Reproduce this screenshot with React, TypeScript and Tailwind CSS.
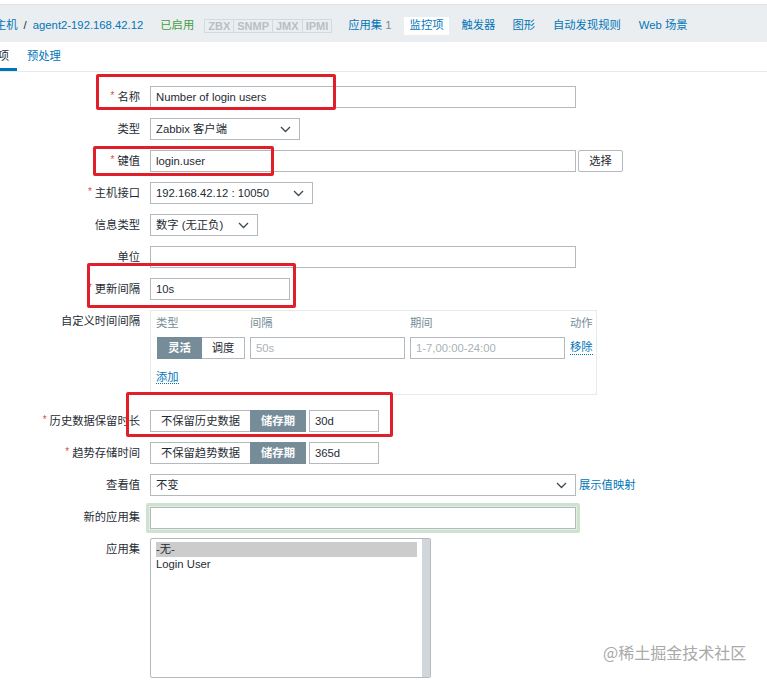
import React from 'react';

const FONT = { fontFamily: '"Liberation Sans", Arial, "Noto Sans CJK SC", sans-serif' };

function Chevron() {
  return (
    <svg width="11" height="7" viewBox="0 0 11 7" className="shrink-0">
      <path d="M1 1l4.5 4.5L10 1" fill="none" stroke="#3a4a52" strokeWidth="1.3" />
    </svg>
  );
}

function Select({ value, width }: { value: string; width: string }) {
  return (
    <div className={`flex items-center justify-between h-[22px] border border-[#b3b9bd] bg-white pl-[5px] pr-[8px] ${width}`}>
      <span>{value}</span>
      <Chevron />
    </div>
  );
}

function Input({ value = '', width, muted = false }: { value?: string; width: string; muted?: boolean }) {
  return (
    <div className={`flex items-center h-[22px] border border-[#b3b9bd] bg-white px-[5px] whitespace-nowrap ${width} ${muted ? 'text-[#a9b3b8]' : ''}`}>
      {value}
    </div>
  );
}

function Row({ label, required = false, children, className = '' }: { label: string; required?: boolean; children: React.ReactNode; className?: string }) {
  return (
    <div className={`flex items-start ${className}`}>
      <div className="w-[140px] h-[22px] flex items-center justify-end shrink-0 whitespace-nowrap">
        {required && <span className="text-[#d64e4e] text-[10px] mr-[3px] -mt-[3px]">*</span>}
        {label}
      </div>
      <div className="ml-[10px] flex items-start">{children}</div>
    </div>
  );
}

function Storage({ off, days }: { off: string; days: string }) {
  return (
    <div className="flex items-center">
      <div className="flex h-[22px]">
        <div className="w-[100px] flex items-center justify-center border border-[#b3b9bd] border-r-0 bg-white">{off}</div>
        <div className="w-[56px] flex items-center justify-center bg-[#768d99] text-white font-bold">储存期</div>
      </div>
      <Input value={days} width="w-[70px] ml-[3px]" />
    </div>
  );
}

function RedBox({ cls }: { cls: string }) {
  return <div className={`absolute border-[3px] border-[#e11f2b] rounded-[2px] pointer-events-none ${cls}`} />;
}

export default function App() {
  return (
    <div className="relative w-[767px] h-[680px] overflow-hidden bg-white text-[11.3px] text-[#1f2c33]" style={FONT}>
      {/* Header bar */}
      <div className="h-[4px] bg-white" />
      <div className="h-[38px] bg-[#ebeef0] border-t border-[#dfe4e7] flex items-center pt-[4px] whitespace-nowrap">
        <span className="ml-[-5px] text-[#0275b8]">主机</span>
        <span className="ml-[6px] text-[#1f2c33]">/</span>
        <span className="ml-[6px] text-[#0275b8]">agent2-192.168.42.12</span>
        <span className="ml-[17px] text-[#429e47]">已启用</span>
        <div className="ml-[10px] flex h-[14px] border border-[#d3d9dc] text-[#b6c0c5] text-[11px] font-bold leading-[12px]">
          <span className="px-[3px] border-r border-[#d3d9dc]">ZBX</span>
          <span className="px-[3px] border-r border-[#d3d9dc]">SNMP</span>
          <span className="px-[3px] border-r border-[#d3d9dc]">JMX</span>
          <span className="px-[3px]">IPMI</span>
        </div>
        <span className="ml-[16px] text-[#0275b8]">应用集 <span className="text-[#768d99]">1</span></span>
        <span className="ml-[12px] bg-white px-[6px] h-[18px] flex items-center text-[#0275b8]">监控项</span>
        <span className="ml-[12px] text-[#0275b8]">触发器</span>
        <span className="ml-[17px] text-[#0275b8]">图形</span>
        <span className="ml-[18px] text-[#0275b8]">自动发现规则</span>
        <span className="ml-[18px] text-[#0275b8]">Web 场景</span>
      </div>

      {/* Tabs */}
      <div className="h-[30px] border-b border-[#e6eaec] flex items-end">
        <div className="ml-[-10px] w-[27px] h-[30px] flex items-center justify-center border-b-[3px] border-[#0275b8]">
          <span className="mt-[4px]">项</span>
        </div>
        <div className="ml-[10px] h-[30px] flex items-center text-[#0275b8]">
          <span className="mt-[1px]">预处理</span>
        </div>
      </div>

      {/* Form */}
      <div className="pt-[14px] flex flex-col gap-[10px]">
        <Row label="名称" required>
          <Input value="Number of login users" width="w-[426px]" />
        </Row>
        <Row label="类型">
          <Select value="Zabbix 客户端" width="w-[150px]" />
        </Row>
        <Row label="键值" required>
          <Input value="login.user" width="w-[426px]" />
          <div className="ml-[2px] h-[22px] w-[45px] flex items-center justify-center border border-[#b3b9bd] rounded-[2px] bg-white">选择</div>
        </Row>
        <Row label="主机接口" required>
          <Select value="192.168.42.12 : 10050" width="w-[163px]" />
        </Row>
        <Row label="信息类型">
          <Select value="数字 (无正负)" width="w-[108px]" />
        </Row>
        <Row label="单位">
          <Input width="w-[426px]" />
        </Row>
        <Row label="更新间隔" required>
          <Input value="10s" width="w-[140px]" />
        </Row>
        <Row label="自定义时间间隔" className="mb-[5px]">
          <div className="w-[447px] h-[85px] border border-[#e6eaec] pl-[5px] pr-[2px] pt-[4px] whitespace-nowrap">
            <div className="flex text-[#768d99] h-[16px] items-center">
              <span className="w-[94px]">类型</span>
              <span className="w-[160px]">间隔</span>
              <span className="w-[160px]">期间</span>
              <span>动作</span>
            </div>
            <div className="flex items-center mt-[6px]">
              <div className="flex h-[22px] ml-[1px]">
                <div className="w-[45px] flex items-center justify-center bg-[#768d99] text-white font-bold">灵活</div>
                <div className="w-[43px] flex items-center justify-center border border-[#b3b9bd] border-l-0 bg-white">调度</div>
              </div>
              <Input value="50s" width="w-[155px] ml-[5px]" muted />
              <Input value="1-7,00:00-24:00" width="w-[155px] ml-[5px]" muted />
              <span className="ml-[5px] text-[#0275b8] border-b border-dotted border-[#0275b8] leading-[13px]">移除</span>
            </div>
            <div className="mt-[10px]">
              <span className="text-[#0275b8] border-b border-dotted border-[#0275b8] leading-[13px]">添加</span>
            </div>
          </div>
        </Row>
        <Row label="历史数据保留时长" required>
          <Storage off="不保留历史数据" days="30d" />
        </Row>
        <Row label="趋势存储时间" required>
          <Storage off="不保留趋势数据" days="365d" />
        </Row>
        <Row label="查看值">
          <Select value="不变" width="w-[426px]" />
          <span className="ml-[3px] h-[22px] flex items-center text-[#0275b8]">展示值映射</span>
        </Row>
        <Row label="新的应用集">
          <div className="-ml-[4px] -mt-[3px] border-[3px] border-[#cde3cf] rounded-[2px] p-[1px] bg-[#e3efe4]">
            <Input width="w-[426px]" />
          </div>
        </Row>
        <Row label="应用集" className="-mt-[5px]">
          <div className="w-[281px] h-[140px] border border-[#b3b9bd] rounded-[2px] bg-white flex">
            <div className="flex-1 pt-[3px] pl-[5px] pr-[5px]">
              <div className="bg-[#cccccc] h-[15px] flex items-center">-无-</div>
              <div className="h-[15px] flex items-center">Login User</div>
            </div>
            <div className="w-[8px] bg-[#cfd7db]" />
          </div>
        </Row>
      </div>

      {/* Annotation boxes */}
      <RedBox cls="left-[96px] top-[74px] w-[240px] h-[36px]" />
      <RedBox cls="left-[93px] top-[146px] w-[181px] h-[30px]" />
      <RedBox cls="left-[87px] top-[263px] w-[209px] h-[45px]" />
      <RedBox cls="left-[126px] top-[392px] w-[267px] h-[45px]" />

      {/* Watermark */}
      <div className="absolute left-[603px] top-[640px] text-[16px] text-[#a9a9a9] whitespace-nowrap" style={{ fontFamily: '"Noto Sans CJK SC", sans-serif' }}>
        @稀土掘金技术社区
      </div>
    </div>
  );
}
